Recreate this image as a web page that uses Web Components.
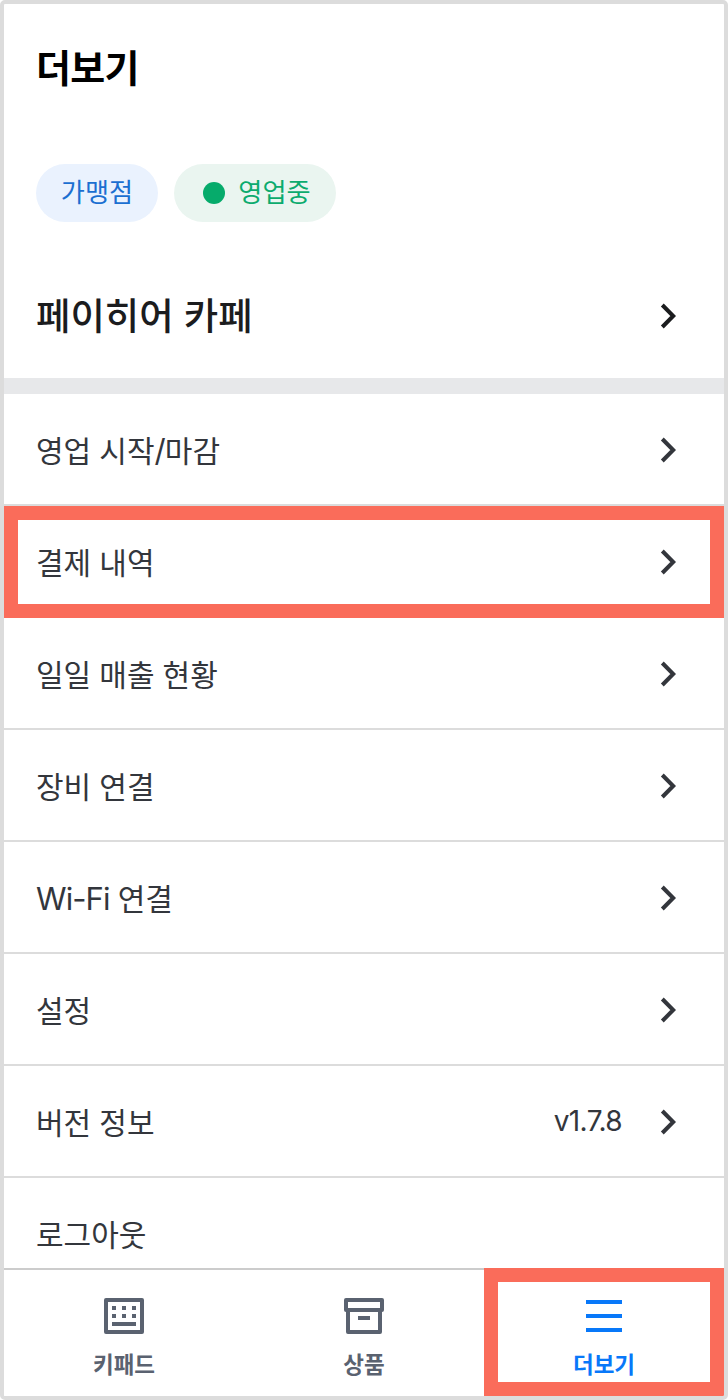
<!DOCTYPE html>
<html lang="ko">
<head>
<meta charset="utf-8">
<title>더보기</title>
<style>
  body {
    margin: 0;
    background: #fff;
    font-family: "Noto Sans CJK KR", "Noto Sans", sans-serif;
  }
</style>
</head>
<body>
<more-screen>
  <screen-title slot="head">더보기</screen-title>
  <badge-row slot="head">
    <status-badge kind="store">가맹점</status-badge>
    <status-badge kind="open" dot>영업중</status-badge>
  </badge-row>
  <menu-row slot="head" large>페이히어 카페</menu-row>

  <menu-row>영업 시작<span>/</span>마감</menu-row>
  <menu-row marked>결제 내역</menu-row>
  <menu-row>일일 매출 현황</menu-row>
  <menu-row>장비 연결</menu-row>
  <menu-row><span>Wi-Fi</span> 연결</menu-row>
  <menu-row>설정</menu-row>
  <menu-row value="v1.7.8">버전 정보</menu-row>
  <menu-row plain>로그아웃</menu-row>

  <tab-item slot="tabs" icon="keypad">키패드</tab-item>
  <tab-item slot="tabs" icon="box">상품</tab-item>
  <tab-item slot="tabs" icon="more" active marked>더보기</tab-item>
</more-screen>

<script>
  const ICONS = {
    keypad: `
      <rect x="6" y="8" width="36" height="32" fill="none" stroke="currentColor" stroke-width="4" stroke-linejoin="round"/>
      <path fill="currentColor" d="M12 14h4v4h-4zM22 14h4v4h-4zM32 14h4v4h-4zM12 22h4v4h-4zM22 22h4v4h-4zM32 22h4v4h-4zM12 30h24v4H12z"/>`,
    box: `
      <path fill="none" stroke="currentColor" stroke-width="4" stroke-linejoin="round" d="M6 8h36v10H6zM8 18h32v22H8z"/>
      <path fill="currentColor" d="M18 24h12v4H18z"/>`,
    more: `<path fill="currentColor" d="M6 8h36v4H6zM6 22h36v4H6zM6 36h36v4H6z"/>`
  };

  // Frame of the screen: header, scrolling list, tab bar
  customElements.define('more-screen', class MoreScreen extends HTMLElement {
    constructor() {
      super();
      this.attachShadow({mode: 'open'}).innerHTML = `
        <style>
          :host {
            display: flex;
            flex-direction: column;
            box-sizing: border-box;
            width: 728px;
            height: 1400px;
            border: 4px solid #dcdcdc;
            border-radius: 5px;
            background: #fff;
            overflow: hidden;
          }
          header {
            flex: none;
            height: 374px;
            border-bottom: 16px solid #e7e8ea;
          }
          main {
            flex: 1;
            min-height: 0;
            overflow: hidden;
          }
          nav {
            flex: none;
            display: grid;
            grid-template-columns: repeat(3, 1fr);
            height: 128px;
            background: #fff;
          }
        </style>
        <header><slot name="head"></slot></header>
        <main><slot></slot></main>
        <nav><slot name="tabs"></slot></nav>
      `;
    }
  });

  customElements.define('screen-title', class ScreenTitle extends HTMLElement {
    constructor() {
      super();
      this.attachShadow({mode: 'open'}).innerHTML = `
        <style>
          :host {
            display: block;
            padding: 34px 32px 70px;
            font-size: 38px;
            font-weight: 700;
            line-height: 56px;
            letter-spacing: -0.7px;
            color: #000;
          }
        </style>
        <slot></slot>
      `;
    }
  });

  customElements.define('badge-row', class BadgeRow extends HTMLElement {
    constructor() {
      super();
      this.attachShadow({mode: 'open'}).innerHTML = `
        <style>
          :host {
            display: flex;
            gap: 16px;
            padding: 0 32px;
          }
        </style>
        <slot></slot>
      `;
    }
  });

  customElements.define('status-badge', class StatusBadge extends HTMLElement {
    constructor() {
      super();
      this.attachShadow({mode: 'open'}).innerHTML = `
        <style>
          :host {
            display: flex;
            align-items: center;
            justify-content: center;
            box-sizing: border-box;
            height: 58px;
            width: 122px;
            border-radius: 29px;
            font-size: 26.2px;
            line-height: 54px;
          }
          :host([kind="store"]) {
            background: #eaf2fe;
            color: #1b6fd1;
          }
          :host([kind="open"]) {
            width: 162px;
            padding-left: 4px;
            background: #eaf5f0;
            color: #0cab6e;
          }
          i {
            display: none;
            width: 22px;
            height: 22px;
            margin-right: 13px;
            border-radius: 50%;
            background: #06ab6b;
          }
          :host([dot]) i {
            display: block;
          }
          p {
            margin: 0 0 4px;
          }
        </style>
        <i></i><p><slot></slot></p>
      `;
    }
  });

  customElements.define('menu-row', class MenuRow extends HTMLElement {
    constructor() {
      super();
      this.attachShadow({mode: 'open'}).innerHTML = `
        <style>
          :host {
            display: flex;
            align-items: center;
            position: relative;
            box-sizing: border-box;
            height: 112px;
            padding: 0 40px 0 32px;
            color: #33363c;
            font-size: 30px;
            word-spacing: -0.3px;
            box-shadow: inset 0 -2px #dcdcdc;
          }
          :host([large]) {
            height: 124px;
            padding-top: 32px;
            padding-bottom: 32px;
            margin-top: 32px;
            color: #1b1c1e;
            font-size: 37.4px;
            font-weight: 500;
            box-shadow: none;
          }
          :host([marked])::after {
            content: "";
            position: absolute;
            inset: 0;
            border: 14px solid #fa6c5a;
          }
          .label {
            flex: 1;
            line-height: 60px;
            padding-bottom: 3px;
          }
          :host([large]) .label {
            padding-bottom: 4px;
          }
          ::slotted(span), .value {
            font-family: Inter, sans-serif;
          }
          ::slotted(span) {
            font-size: 31px;
            line-height: 1;
            letter-spacing: -0.9px;
          }
          .value {
            margin-right: 30px;
            padding-bottom: 3px;
            font-size: 28px;
            letter-spacing: -0.6px;
          }
          svg {
            width: 32px;
            height: 32px;
          }
          :host([plain]) svg {
            display: none;
          }
        </style>
        <div class="label"><slot></slot></div>
        <div class="value"></div>
        <svg viewBox="0 0 32 32">
          <path d="M10.3 5L21.2 16L10.3 27" fill="none" stroke="currentColor" stroke-width="4"/>
        </svg>
      `;
    }
    connectedCallback() {
      this.shadowRoot.querySelector('.value').textContent = this.getAttribute('value') || '';
    }
  });

  customElements.define('tab-item', class TabItem extends HTMLElement {
    constructor() {
      super();
      this.attachShadow({mode: 'open'}).innerHTML = `
        <style>
          :host {
            display: flex;
            flex-direction: column;
            align-items: center;
            position: relative;
            box-sizing: border-box;
            padding-top: 24px;
            color: #5a6270;
            font-size: 22.5px;
            font-weight: 700;
            line-height: 32px;
            box-shadow: inset 0 2px #ccc;
          }
          :host([active]) {
            color: #0878f9;
          }
          :host([marked])::after {
            content: "";
            position: absolute;
            inset: 0;
            border: 14px solid #fa6c5a;
          }
          svg {
            width: 48px;
            height: 48px;
            margin-bottom: 7px;
          }
        </style>
        <svg viewBox="0 0 48 48"></svg>
        <slot></slot>
      `;
    }
    connectedCallback() {
      this.shadowRoot.querySelector('svg').innerHTML = ICONS[this.getAttribute('icon')];
    }
  });
</script>
</body>
</html>
